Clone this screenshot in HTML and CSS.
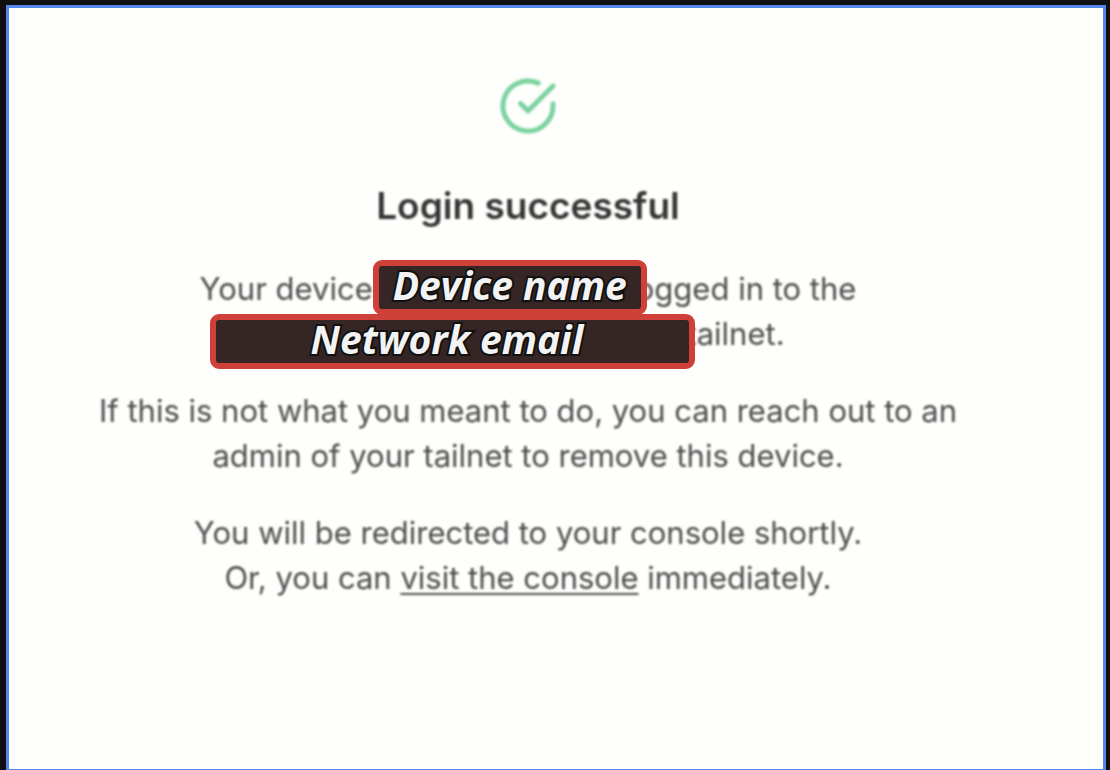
FILE: index.html
```html
<!DOCTYPE html>
<html lang="en">
<head>
    <meta charset="UTF-8">
    <meta name="viewport" content="width=device-width, initial-scale=1.0">
    <title>Login successful</title>
    <link rel="stylesheet" href="styles.css">
</head>
<body>
    <main class="window">
        <!-- Success Icon -->
        <svg class="check soft" viewBox="0 0 24 24" fill="none" stroke="currentColor" stroke-width="2" stroke-linecap="round" stroke-linejoin="round" aria-hidden="true">
            <path d="M22 11.08V12a10 10 0 1 1-5.93-9.14"></path>
            <path d="M22 4 12 14.01l-3-3"></path>
        </svg>

        <h1 class="soft">Login successful</h1>

        <!-- Device and network are covered by labels -->
        <p>
            <span class="soft">Your device</span><span class="slot device"><span class="label">Device name</span></span><span class="soft">ogged in to the</span><br>
            <span class="slot network"><span class="label">Network email</span></span><span class="soft">tailnet.</span>
        </p>
        <p class="soft">
            If this is not what you meant to do, you can reach out to an<br>
            admin of your tailnet to remove this device.
        </p>
        <p class="soft">
            You will be redirected to your console shortly.<br>
            Or, you can <a href="#console">visit the console</a> immediately.
        </p>
    </main>
</body>
</html>
```

FILE: styles.css
```css
/* Global Styling */
* {
    box-sizing: border-box;
}
body {
    margin: 0;
    padding: 5px 4px 0 6px;
    min-height: 100vh;
    display: flex;
    background-color: #101010;
    font-family: Inter, sans-serif;
}

/* Window */
.window {
    flex: 1;
    display: flex;
    flex-direction: column;
    align-items: center;
    padding: 68px 56px 32px 0;
    border: 3px solid #5387ea;
    border-bottom-width: 1px;
    background-color: #fefefc;
    text-align: center;
}
.soft {
    filter: blur(1px);
}

/* Success Icon */
.check {
    width: 60px;
    height: 60px;
    color: #7dd3a0;
}

/* Text */
h1 {
    margin: 46px 0 36px;
    font-size: 37px;
    line-height: 48px;
    font-weight: 600;
    color: #343634;
}
p {
    margin: 0 0 32px;
    font-size: 31px;
    line-height: 45px;
    color: #4c4e4c;
}
a {
    color: inherit;
    text-decoration-thickness: 2px;
    text-underline-offset: 4px;
}

/* Labels */
.slot {
    display: inline-block;
    position: relative;
    height: 45px;
    vertical-align: top;
}
.device {
    width: 263px;
}
.network {
    width: 415px;
}
.label {
    position: absolute;
    z-index: 1;
    top: -6px;
    height: 55px;
    border: 6px solid #cf4039;
    border-radius: 9px;
    background-color: #352625;
    color: #f3f3f3;
    font-family: "Comic Sans MS", "Open Sans", sans-serif;
    font-size: 39px;
    font-weight: 700;
    font-style: italic;
    line-height: 38px;
    white-space: nowrap;
    -webkit-text-stroke: 4px #111111;
    paint-order: stroke fill;
}
.device .label {
    left: 0;
    width: 274px;
}
.network .label {
    top: 3px;
    right: -9px;
    width: 485px;
    padding-right: 12px;
}
```
